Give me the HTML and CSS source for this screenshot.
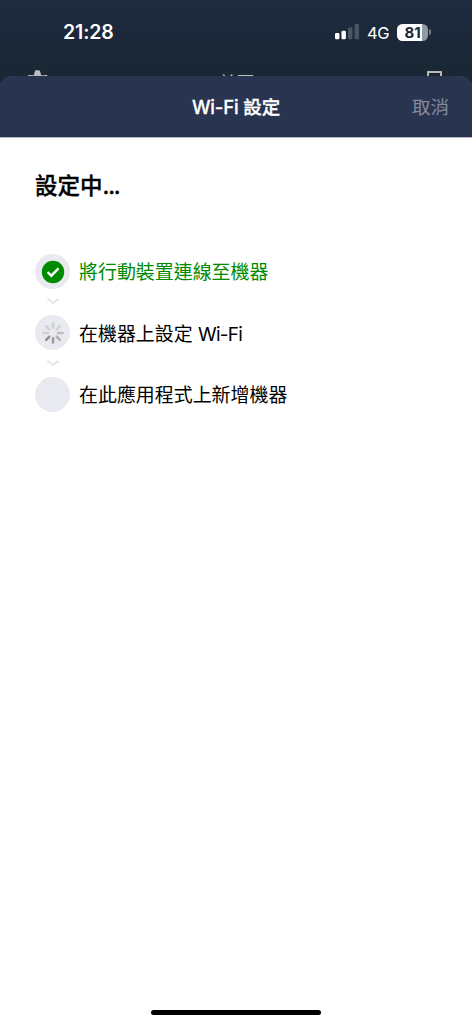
FILE: index.html
```html
<!DOCTYPE html>
<html lang="zh-Hant">
<head>
<meta charset="utf-8">
<meta name="viewport" content="width=device-width">
<title>Wi-Fi 設定</title>
<link rel="stylesheet" href="styles.css">
</head>
<body>
<div class="screen">
  <header class="backdrop">
    <div class="status">
      <span class="time">21:28</span>
      <div class="indicators">
        <svg class="signal" width="25" height="16" viewBox="0 0 25 16">
          <rect x="0" y="9" width="4.4" height="6.2" rx="1.2" fill="#fff"/>
          <rect x="6.5" y="6.7" width="4.4" height="8.5" rx="1.2" fill="#fff"/>
          <rect x="13" y="3.5" width="4.4" height="11.7" rx="1.2" fill="#4a5562"/>
          <rect x="19.6" y="0" width="4.4" height="15.2" rx="1.2" fill="#4a5562"/>
        </svg>
        <span class="network">4G</span>
        <div class="battery"><span class="level">81</span></div>
        <span class="battery-cap"></span>
      </div>
    </div>
    <div class="under-nav">
      <svg width="24" height="24" viewBox="0 0 24 24" fill="#bcc0bd">
        <path d="M10 .2h3q.8 0 1 .8l1.200 4.200h2.800l1.500-.3h1.500l2 4H.500l2-4H4l1.500.3H7.800l1.200-4.200q.2-.8 1-.8z"/>
      </svg>
      <span class="under-title">首頁</span>
      <svg width="18" height="24" viewBox="0 0 18 24" fill="none" stroke="#bcb9b1" stroke-width="2">
        <path d="M2 22V2h13v20"/>
      </svg>
    </div>
  </header>
  <main class="sheet">
    <div class="sheet-bar">
      <h1 class="sheet-title">Wi-Fi 設定</h1>
      <span class="cancel">取消</span>
    </div>
    <section class="content">
      <h2 class="heading">設定中<span class="dots">...</span></h2>
      <div class="steps">
        <div class="step done">
          <span class="badge">
            <svg width="24" height="24" viewBox="0 0 24 24"><circle cx="12" cy="12" r="11.200" fill="#008a00"/><path d="M6.600 12.200l3.700 3.500 7.200-7.400" fill="none" stroke="#fff" stroke-width="2.400"/></svg>
          </span>
          <span class="label">將行動裝置連線至機器</span>
        </div>
        <svg class="arrow" width="12" height="6" viewBox="0 0 12 6"><path d="M.4 .8L6 4.800 11.600 .8"/></svg>
        <div class="step">
          <span class="badge">
            <svg width="24" height="24" viewBox="-12 -12 24 24" fill="none" stroke-width="2.500" stroke-linecap="round">
              <path d="M0-5.200V-9.600" stroke="#cfd0d3"/>
              <path d="M3.700-3.700L6.800-6.800" stroke="#cfd0d3"/>
              <path d="M5.200 0H9.600" stroke="#bcbdc0"/>
              <path d="M3.700 3.700L6.800 6.800" stroke="#acadb0"/>
              <path d="M0 5.200V9.600" stroke="#9c9da0"/>
              <path d="M-3.700 3.700L-6.800 6.800" stroke="#8d8e91"/>
              <path d="M-5.200 0H-9.600" stroke="#cfd0d3"/>
              <path d="M-3.700-3.700L-6.800-6.800" stroke="#cfd0d3"/>
            </svg>
          </span>
          <span class="label">在機器上設定 <span class="latin">Wi-Fi</span></span>
        </div>
        <svg class="arrow" width="12" height="6" viewBox="0 0 12 6"><path d="M.4 .8L6 4.800 11.600 .8"/></svg>
        <div class="step">
          <span class="badge"></span>
          <span class="label">在此應用程式上新增機器</span>
        </div>
      </div>
    </section>
    <div class="home-indicator"></div>
  </main>
</div>
</body>
</html>
```
FILE: styles.css
```css
* { box-sizing: border-box; }

body {
  margin: 0;
  font-family: Inter, "Noto Sans CJK TC", sans-serif;
  color: #000;
}

.screen {
  display: flex;
  flex-direction: column;
  height: 1024px;
  overflow: hidden;
  background: linear-gradient(#1f2a40 0, #1a2735 64px, #1a2735 100px);
}

.backdrop {
  height: 76px;
  flex: none;
}

.status {
  display: flex;
  justify-content: space-between;
  align-items: center;
  height: 64px;
  padding: 0 41px 0 63px;
  color: #fff;
}

.time {
  font-size: 19.5px;
  font-weight: 600;
  letter-spacing: -0.1px;
}

.indicators {
  display: flex;
  align-items: center;
}

.network {
  width: 22px;
  margin: 1px 8px 0 7px;
  font-size: 16.500px;
  font-weight: 400;
  letter-spacing: -0.3px;
}

.battery {
  width: 31px;
  height: 17px;
  border-radius: 5.500px;
  background: linear-gradient(90deg, #fff 81%, #9299a3 81%);
  color: #1c2838;
  text-align: center;
}

.level {
  display: block;
  font-size: 15px;
  font-weight: 700;
  line-height: 17px;
}

.battery-cap {
  width: 2px;
  height: 6px;
  margin-left: 1px;
  border-radius: 0 2px 2px 0;
  background: #77808b;
}

.under-nav {
  display: flex;
  justify-content: space-between;
  align-items: flex-start;
  height: 6px;
  margin-top: 6px;
  padding: 0 28px 0 26px;
}

.under-title {
  margin: 4px 3px 0 0;
  font-size: 18px;
  line-height: 20px;
  color: #bcc0bd;
}

.sheet {
  position: relative;
  display: flex;
  flex: 1;
  flex-direction: column;
  overflow: hidden;
  border-radius: 12px 12px 0 0;
  background: linear-gradient(#293451 61px, #fff 61px);
}

.sheet-bar {
  display: grid;
  grid-template-columns: 1fr auto 1fr;
  align-items: center;
  height: 61px;
  padding: 0 23px 2px;
  background: #293451;
  box-shadow: 0 0.500px 0 #69708a;
}

.sheet-title {
  grid-column: 2;
  margin: 0;
  font-size: 18.500px;
  font-weight: 500;
  letter-spacing: -0.15px;
  color: #fff;
  -webkit-text-stroke: 0.3px #fff;
}

.cancel {
  justify-self: end;
  font-size: 18.500px;
  color: #858b9c;
}

.content {
  flex: 1;
  padding: 34px 35px 0;
}

.heading {
  margin: 0;
  font-size: 22.500px;
  font-weight: 500;
  line-height: 30px;
  -webkit-text-stroke: 0.35px #000;
}

.dots {
  font-weight: 500;
  letter-spacing: -1.2px;
}

.steps {
  display: flex;
  flex-direction: column;
  margin-top: 53px;
}

.step {
  display: flex;
  align-items: center;
  gap: 9px;
  height: 35px;
}

.badge {
  display: flex;
  align-items: center;
  justify-content: center;
  width: 35px;
  height: 35px;
  border-radius: 50%;
  background: #e9eaef;
}

.label {
  padding-top: 4px;
  font-size: 18.950px;
  line-height: 28px;
  white-space: nowrap;
}

.latin { letter-spacing: -0.7px; }

.done .label {
  padding-top: 2px;
  color: #008a00;
}

.arrow {
  flex: none;
  margin: 9.200px 0 11.200px 11.500px;
  fill: none;
  stroke: #e4e5ea;
  stroke-width: 1.800;
}

.home-indicator {
  align-self: center;
  width: 170px;
  height: 5.500px;
  margin-bottom: 8.700px;
  border-radius: 3px;
  background: #000;
}
```
